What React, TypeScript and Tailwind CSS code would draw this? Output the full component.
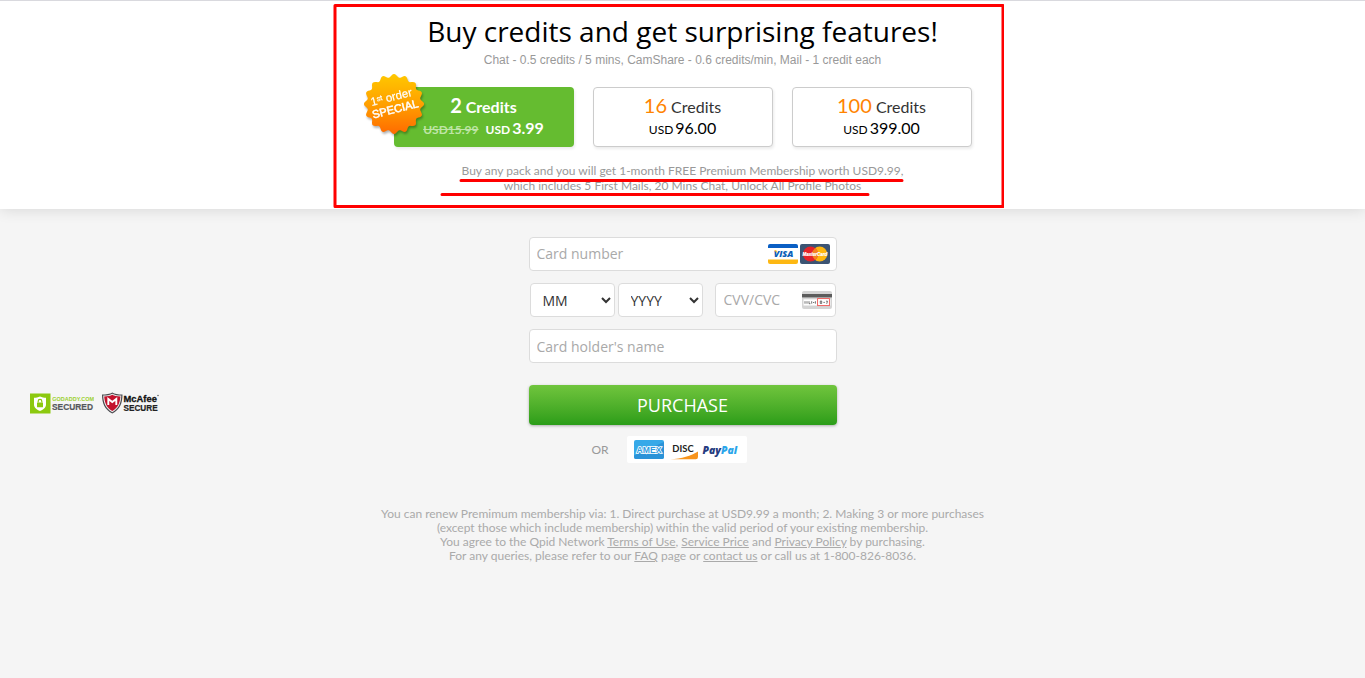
import type { ReactNode } from "react";

const LATO = "font-['Lato','Liberation_Sans',sans-serif]";
const OPEN = "font-['Open_Sans','Liberation_Sans',sans-serif]";
const FIELD = "h-[34px] rounded border border-[#dcdcdc] bg-white text-sm";

function SpecialBadge() {
  const points: string[] = [];
  const teeth = 16;
  for (let i = 0; i <= 160; i++) {
    const a = (i / 160) * Math.PI * 2;
    const r = 28.4 + 1.7 * Math.cos(a * teeth);
    points.push(`${(31 + r * Math.cos(a)).toFixed(2)},${(31 + r * Math.sin(a)).toFixed(2)}`);
  }
  return (
    <svg
      className="absolute -left-[31px] -top-3.5 h-16 w-16 overflow-visible drop-shadow-[1px_2px_1px_rgba(0,0,0,0.3)]"
      viewBox="0 0 64 64"
      role="img"
      aria-label="1st order special"
    >
      <defs>
        <linearGradient id="badge" x1="0" y1="0" x2="0" y2="1">
          <stop offset="0" stopColor="#ffc800" />
          <stop offset="0.5" stopColor="#ffa000" />
          <stop offset="1" stopColor="#ff6a00" />
        </linearGradient>
      </defs>
      <polygon points={points.join(" ")} fill="url(#badge)" />
      <g transform="rotate(-14 31 31)" fill="#fff" fontFamily="Liberation Sans, sans-serif" textAnchor="middle">
        <text x="30" y="27.5" fontSize="11.5" fontWeight="400" stroke="#fff" strokeWidth="0.2">
          1<tspan fontSize="7.5" dy="-3">st</tspan>
          <tspan dy="3"> order</tspan>
        </text>
        <text x="31" y="40" fontSize="11.2" fontWeight="400" stroke="#fff" strokeWidth="0.5">SPECIAL</text>
      </g>
    </svg>
  );
}

function Visa() {
  return (
    <svg width="30" height="20" viewBox="0 0 30 20" role="img" aria-label="Visa">
      <rect width="30" height="20" rx="2" fill="#fff" />
      <path d="M0 4V2a2 2 0 0 1 2-2h26a2 2 0 0 1 2 2v2z" fill="#0a5fc4" />
      <path d="M0 15.5h30V18a2 2 0 0 1-2 2H2a2 2 0 0 1-2-2z" fill="#fdb813" />
      <text x="15.5" y="13" fontSize="9" fontWeight="800" fontStyle="italic" fontFamily="Open Sans, sans-serif" textAnchor="middle" fill="#0a5fb8">VISA</text>
      <path d="M6 6.3h2.3l.9 2.6z" fill="#fdb813" />
    </svg>
  );
}

function MasterCard() {
  return (
    <svg width="30" height="20" viewBox="0 0 30 20" role="img" aria-label="MasterCard">
      <rect width="30" height="20" rx="2" fill="#3c5473" />
      <circle cx="19.7" cy="10" r="7.6" fill="#ffb60f" />
      <circle cx="10.5" cy="10" r="7.6" fill="#e6232a" />
      <path d="M15.1 4a7.6 7.6 0 0 1 0 12a7.6 7.6 0 0 1 0-12z" fill="#f58220" />
      <text x="15" y="11.8" fontSize="4.5" fontWeight="700" fontStyle="italic" fontFamily="Liberation Sans, sans-serif" textAnchor="middle" fill="#fff" stroke="#fff" strokeWidth="0.2">MasterCard</text>
    </svg>
  );
}

function CvvCard() {
  return (
    <svg width="30" height="18" viewBox="0 0 30 18" role="img" aria-label="Security code">
      <rect width="30" height="18" rx="2" fill="#d4d4d4" />
      <rect y="3" width="30" height="3.4" fill="#5c5c5c" />
      <rect x="1.5" y="8.3" width="27" height="6.2" fill="#fff" />
      <path d="M3 10.2v2.5M5 10.2v2.5M7 10.2v2.5h1.4M9.7 10.2v2.5M11 11.5h1.3M13.4 10.2v2.5" stroke="#666" strokeWidth="0.9" fill="none" />
      <rect x="15.6" y="7.6" width="11.8" height="7" fill="#fff" stroke="#ef5350" strokeWidth="0.9" />
      <path d="M18.3 10v2.5h1.4V10zM21.4 11.4h1.5M24 10.2h1.5l-.8 2.6" stroke="#555" strokeWidth="0.8" fill="none" />
    </svg>
  );
}

function AltPayments() {
  return (
    <svg width="120" height="27" viewBox="0 0 120 27" role="img" aria-label="Amex, Discover, PayPal">
      <rect width="120" height="27" rx="2" fill="#fff" />
      <rect x="7" y="4" width="30" height="19" rx="2" fill="#37a9e8" />
      <path d="M7 19.5L37 6v15a2 2 0 0 1-2 2H9a2 2 0 0 1-2-2z" fill="#2b93d8" />
      <text x="22" y="16.8" fontSize="8.6" fontWeight="700" fontFamily="Liberation Sans, sans-serif" textAnchor="middle" fill="#2f9be0" stroke="#fff" strokeWidth="1.7" paintOrder="stroke">AMEX</text>
      <path d="M43 23.2c12-.6 21-3.600 28-7.800v5.600a2.200 2.200 0 0 1-2.200 2.200z" fill="#f7941d" />
      <text x="56" y="16" fontSize="9.4" fontWeight="700" fontFamily="Lato, sans-serif" textAnchor="middle" fill="#222">DISC</text>
      <text x="75.500" y="17.5" fontSize="10.4" fontWeight="800" fontStyle="italic" fontFamily="Open Sans, sans-serif" fill="#253b80">
        Pay<tspan fill="#2aa5ea">Pal</tspan>
      </text>
    </svg>
  );
}

function GoDaddySeal() {
  return (
    <svg width="64" height="21" viewBox="0 0 64 21" role="img" aria-label="GoDaddy secured">
      <rect y="0.500" width="20.500" height="20" fill="#8cc90f" />
      <path d="M10 3.500c2 1 4 1.300 6 1.300v7c0 3-3 5-6 6.200c-3-1.200-6-3.200-6-6.200v-7c2 0 4-.3 6-1.300z" fill="#fff" />
      <rect x="7" y="9.500" width="6" height="4.800" rx="0.500" fill="#8cc90f" />
      <path d="M8.200 9.500V8.200a1.800 1.800 0 0 1 3.600 0v1.300" fill="none" stroke="#8cc90f" strokeWidth="1.200" />
      <text x="22.300" y="8.200" fontSize="5.500" fontWeight="700" fontFamily="Liberation Sans, sans-serif" fill="#9bd02f">GODADDY.COM</text>
      <text x="22" y="17.400" fontSize="8.400" fontWeight="700" fontFamily="Liberation Sans, sans-serif" fill="#55585c" stroke="#55585c" strokeWidth="0.200">SECURED</text>
    </svg>
  );
}

function McAfeeSeal() {
  return (
    <svg width="58" height="22" viewBox="0 0 58 22" role="img" aria-label="McAfee secure">
      <path d="M0 2.500C4 2.500 8 2 10.300.5C12.600 2 16 2.500 20.500 2.500C20.500 11 18 17.500 10.300 21.500C2.500 17.500 0 11 0 2.500z" fill="#4b4b4f" />
      <path d="M1.200 3.500C5 3.500 8 3 10.300 1.700C12.600 3 16 3.500 19.300 3.500C19 11 17 16.500 10.300 20.200C3.600 16.500 1.500 11 1.200 3.500z" fill="#eee" />
      <path d="M2.200 4.500C6 4.400 8.500 3.800 10.300 2.800C12.100 3.800 15 4.400 18.400 4.500C17.900 11 16 15.800 10.300 19C4.600 15.800 2.700 11 2.200 4.500z" fill="#c3122d" />
      <path d="M6.300 13V7l4 3l4-3v6" fill="none" stroke="#fff" strokeWidth="1.900" />
      <text x="21.500" y="10" fontSize="9.400" fontWeight="700" fontFamily="Liberation Sans, sans-serif" fill="#111" stroke="#111" strokeWidth="0.300">McAfee</text>
      <circle cx="56" cy="3.500" r="0.700" fill="#444" />
      <text x="21.500" y="19" fontSize="8.200" fontWeight="700" fontFamily="Liberation Sans, sans-serif" fill="#222" stroke="#222" strokeWidth="0.200">SECURE</text>
    </svg>
  );
}

function Pack({ count, price }: { count: string; price: string }) {
  return (
    <button
      type="button"
      className="h-[60px] w-[180px] rounded border border-[#ccc] bg-white pb-1 text-center shadow-[1px_2px_3px_rgba(0,0,0,0.08)]"
    >
      <span className="block text-base leading-6 text-[#333]">
        <span className="text-xl leading-6 text-[#ff8400]">{count}</span> Credits
      </span>
      <span className="block text-base leading-[18px] text-black">
        <span className="mr-0.5 text-xs">USD</span>
        {price}
      </span>
    </button>
  );
}

function Link({ children }: { children: ReactNode }) {
  return (
    <a href="#" className="underline">
      {children}
    </a>
  );
}

export default function App() {
  return (
    <div className={`min-h-screen bg-[#f5f5f5] ${LATO}`}>
      <header className="relative border-t border-[#d9d9de] bg-white pb-4 pt-2.5 text-center shadow-[0_1px_14px_rgba(0,0,0,0.12)]">
        <h1 className={`text-[28px] leading-10 text-black ${OPEN}`}>Buy credits and get surprising features!</h1>
        <p className="font-['Liberation_Sans',sans-serif] text-xs leading-[18px] text-[#999]">
          Chat - 0.5 credits / 5 mins, CamShare - 0.6 credits/min, Mail - 1 credit each
        </p>
        <div className="mt-[18px] flex justify-center gap-[19px]">
          <button
            type="button"
            className="relative h-[60px] w-[180px] rounded bg-[#65bc30] pb-1 text-center font-bold text-white shadow-[1px_2px_3px_rgba(0,0,0,0.08)]"
          >
            <span className="block text-base leading-6">
              <span className="text-xl leading-6">2</span> Credits
            </span>
            <span className="block text-base leading-[18px]">
              <s className="mr-[7px] text-xs text-[#bfe5a6]">USD15.99</s>
              <span className="mr-0.5 text-xs">USD</span>
              3.99
            </span>
            <SpecialBadge />
          </button>
          <Pack count="16" price="96.00" />
          <Pack count="100" price="399.00" />
        </div>
        <p className="mt-4 text-xs leading-[15px] text-[#999]">
          Buy any pack and you will get 1-month FREE Premium Membership worth USD9.99,
          <br />
          which includes 5 First Mails, 20 Mins Chat, Unlock All Profile Photos
        </p>
        <svg
          className="pointer-events-none absolute left-1/2 top-[3px] -ml-[351px] h-[205px] w-[672px]"
          viewBox="0 0 672 205"
          aria-hidden="true"
          fill="none"
          stroke="#f00"
          strokeWidth="3"
          strokeLinecap="round"
        >
          <rect x="3" y="1.5" width="668" height="201" strokeLinejoin="round" />
          <path d="M129 176.500H570M110 190.500H536" />
        </svg>
      </header>

      <main className="pt-7">
        <form onSubmit={(e) => e.preventDefault()}>
          <div className={`mx-auto flex w-[308px] flex-col gap-3 ${OPEN}`}>
            <div className={`${FIELD} flex items-center gap-0.5 pl-[7px] pr-1.5`}>
              <input
                aria-label="Card number"
                placeholder="Card number"
                className="min-w-0 flex-1 bg-transparent outline-none placeholder:text-[#a9a9a9]"
              />
              <Visa />
              <MasterCard />
            </div>
            <div className="flex px-px">
              <select aria-label="Month" className={`${FIELD} w-[85px] pl-2 text-[#333]`}>
                <option>MM</option>
                {Array.from({ length: 12 }, (_, i) => (
                  <option key={i}>{String(i + 1).padStart(2, "0")}</option>
                ))}
              </select>
              <select aria-label="Year" className={`${FIELD} ml-[3px] w-[85px] pl-2 text-[#333]`}>
                <option>YYYY</option>
                {Array.from({ length: 10 }, (_, i) => (
                  <option key={i}>{2020 + i}</option>
                ))}
              </select>
              <div className={`${FIELD} ml-3 flex min-w-0 flex-1 items-center pl-2 pr-[3px]`}>
                <input
                  aria-label="CVV/CVC"
                  placeholder="CVV/CVC"
                  className="w-0 min-w-0 flex-1 bg-transparent outline-none placeholder:text-[#a9a9a9]"
                />
                <CvvCard />
              </div>
            </div>
            <input
              aria-label="Card holder's name"
              placeholder="Card holder's name"
              className={`${FIELD} px-[7px] outline-none placeholder:text-[#a9a9a9]`}
            />
          </div>

          <div className="mt-[22px] grid grid-cols-[1fr_308px_1fr] items-center">
            <div className="flex items-center gap-2 pb-1 pl-[30px]">
              <GoDaddySeal />
              <McAfeeSeal />
            </div>
            <button
              type="submit"
              className={`h-10 rounded bg-linear-to-b from-[#70c53d] to-[#2a9d18] text-lg text-white shadow-[0_1px_3px_rgba(0,0,0,0.3)] ${OPEN}`}
            >
              PURCHASE
            </button>
          </div>
        </form>

        <div className="mx-auto mt-[11px] flex w-[308px] items-center gap-[18px] pl-[63px] text-xs text-[#999]">
          <span>OR</span>
          <AltPayments />
        </div>

        <footer className="mt-11 text-center text-xs leading-[14px] text-[#aaa]">
          You can renew Premimum membership via: 1. Direct purchase at USD9.99 a month; 2. Making 3 or more purchases
          <br />
          (except those which include membership) within the valid period of your existing membership.
          <br />
          You agree to the Qpid Network <Link>Terms of Use</Link>, <Link>Service Price</Link> and{" "}
          <Link>Privacy Policy</Link> by purchasing.
          <br />
          For any queries, please refer to our <Link>FAQ</Link> page or <Link>contact us</Link> or call us at
          1-800-826-8036.
        </footer>
      </main>
    </div>
  );
}
